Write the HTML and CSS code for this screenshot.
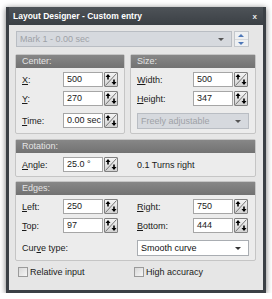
FILE: index.html
```html
<!DOCTYPE html>
<html lang="en">
<head>
    <meta charset="UTF-8">
    <title>Layout Designer - Custom entry</title>
    <link rel="stylesheet" href="styles.css">
</head>
<body>
    <div class="window">
        <div class="titlebar">
            <span class="title">Layout Designer - Custom entry</span>
            <span class="close">x</span>
        </div>
        <div class="client">
            <div class="mark-row">
                <div class="combo disabled mark">Mark 1 - 0.00 sec<span class="arrow"></span></div>
                <div class="updown">
                    <span class="ud up"></span>
                    <span class="ud down"></span>
                </div>
            </div>

            <div class="pair">
                <div class="group">
                    <div class="group-head">Center:</div>
                    <div class="group-body grid-center">
                        <label><u>X</u>:</label>
                        <div class="field">500</div>
                        <div class="spin"></div>
                        <label><u>Y</u>:</label>
                        <div class="field">270</div>
                        <div class="spin"></div>
                        <label class="gap-top"><u>T</u>ime:</label>
                        <div class="field gap-top">0.00 sec</div>
                        <div class="spin gap-top"></div>
                    </div>
                </div>
                <div class="group">
                    <div class="group-head">Size:</div>
                    <div class="group-body grid-size">
                        <label><u>W</u>idth:</label>
                        <div class="field">500</div>
                        <div class="spin"></div>
                        <label><u>H</u>eight:</label>
                        <div class="field">347</div>
                        <div class="spin"></div>
                        <div class="combo disabled wide gap-top">Freely adjustable<span class="arrow"></span></div>
                    </div>
                </div>
            </div>

            <div class="group">
                <div class="group-head">Rotation:</div>
                <div class="group-body grid-full">
                    <label><u>A</u>ngle:</label>
                    <div class="field">25.0 °</div>
                    <div class="spin"></div>
                    <span></span>
                    <span class="note">0.1 Turns right</span>
                </div>
            </div>

            <div class="group">
                <div class="group-head">Edges:</div>
                <div class="group-body grid-full">
                    <label><u>L</u>eft:</label>
                    <div class="field">250</div>
                    <div class="spin"></div>
                    <span></span>
                    <label><u>R</u>ight:</label>
                    <div class="field">750</div>
                    <div class="spin"></div>

                    <label><u>T</u>op:</label>
                    <div class="field">97</div>
                    <div class="spin"></div>
                    <span></span>
                    <label><u>B</u>ottom:</label>
                    <div class="field">444</div>
                    <div class="spin"></div>

                    <label class="curve gap-top">Cur<u>v</u>e type:</label>
                    <div class="combo curve-combo gap-top">Smooth curve<span class="arrow"></span></div>
                </div>
            </div>

            <div class="checks">
                <label class="check"><span class="box"></span>Relative input</label>
                <label class="check"><span class="box"></span>High accuracy</label>
            </div>
        </div>
    </div>
</body>
</html>
```

FILE: styles.css
```css
body {
    margin: 0;
    padding: 0;
    background: #ffffff;
    font-family: "Liberation Sans", Arial, sans-serif;
    font-size: 9px;
    color: #1a1a1a;
}
.window {
    box-sizing: border-box;
    width: 260px;
    height: 286px;
    margin: 7px 0 0 6px;
    padding: 0 3px 3px 3px;
    background: #3b4045;
    box-shadow: 0 1px 6px rgba(0, 0, 0, 0.55);
}
.titlebar {
    display: flex;
    align-items: center;
    justify-content: space-between;
    height: 18px;
    padding: 0 6px 0 4px;
    background: linear-gradient(#4e5358, #3b4045);
}
.title {
    color: #ffffff;
    font-weight: bold;
    font-size: 8.5px;
}
.close {
    color: #e8e8e8;
    font-weight: bold;
    font-size: 8px;
}
.client {
    box-sizing: border-box;
    height: 265px;
    padding: 6px 7px 0 6px;
    background: #e6e6e6;
}
.mark-row {
    display: flex;
    gap: 2px;
    margin-left: 1px;
}
.combo {
    box-sizing: border-box;
    position: relative;
    height: 16px;
    line-height: 14px;
    padding-left: 3px;
    border: 1px solid #a9adb2;
    background: #ffffff;
    color: #111;
}
.combo.disabled {
    background: #d6d9de;
    border-color: #b9bdc3;
    color: #9ea2a7;
}
.arrow {
    position: absolute;
    right: 7px;
    top: 6px;
    width: 0;
    height: 0;
    border-left: 3px solid transparent;
    border-right: 3px solid transparent;
    border-top: 3px solid #333;
}
.combo.disabled .arrow {
    border-top-color: #555;
}
.mark {
    width: 216px;
}
.updown {
    box-sizing: border-box;
    width: 15px;
    height: 16px;
    display: flex;
    flex-direction: column;
    border: 1px solid #c3c7cc;
    background: #eef0f2;
}
.ud {
    flex: 1;
    position: relative;
}
.ud::after {
    content: "";
    position: absolute;
    left: 3px;
    top: 2px;
    border-left: 3px solid transparent;
    border-right: 3px solid transparent;
}
.ud.up::after {
    border-bottom: 3px solid #4f78b8;
}
.ud.down {
    border-top: 1px solid #d5d8dc;
}
.ud.down::after {
    top: 2px;
    border-top: 3px solid #4f78b8;
}
.pair {
    display: grid;
    grid-template-columns: 110px 1fr;
    gap: 5px;
    margin-top: 7px;
}
.group {
    border: 1px solid #c5c5c5;
    border-radius: 2px;
    background: #ececec;
    margin-bottom: 4px;
}
.pair .group {
    margin-bottom: 0;
}
.pair + .group {
    margin-top: 5px;
}
.group-head {
    height: 13px;
    line-height: 13px;
    padding-left: 6px;
    background: linear-gradient(#878787, #727272);
    color: #e4e4e4;
}
.group-body {
    display: grid;
    align-items: center;
    row-gap: 4px;
    padding: 4px 0 4px 6px;
}
.grid-center {
    grid-template-columns: 41px 41px 14px;
}
.grid-size {
    grid-template-columns: 56px 41px 14px;
}
.grid-full {
    grid-template-columns: 41px 41px 14px 19px 56px 41px 14px;
}
.gap-top {
    margin-top: 3px;
}
.field {
    box-sizing: border-box;
    width: 40px;
    height: 15px;
    line-height: 13px;
    padding-left: 3px;
    border: 1px solid #a6a6a6;
    background: #ffffff;
    white-space: nowrap;
    overflow: hidden;
}
.spin {
    box-sizing: border-box;
    width: 14px;
    height: 15px;
    border: 1px solid #808080;
    border-radius: 1px;
    background:
        url("data:image/svg+xml,%3Csvg xmlns='http://www.w3.org/2000/svg' width='12' height='13'%3E%3Cpath d='M11.5 0.5 L0.5 12.5' stroke='%23777' stroke-width='1'/%3E%3Cpath d='M3 1 L5.5 4 L3.8 4 L3.8 6.5 L2.2 6.5 L2.2 4 L0.5 4 Z' fill='%23000'/%3E%3Cpath d='M9 12 L6.5 9 L8.2 9 L8.2 6.5 L9.8 6.5 L9.8 9 L11.5 9 Z' fill='%23000'/%3E%3C/svg%3E") no-repeat center,
        linear-gradient(#f4f4f4, #d2d2d2);
}
.wide {
    grid-column: 1 / -1;
    width: 112px;
}
.note {
    grid-column: 5 / -1;
}
.curve {
    grid-column: 1 / 4;
}
.curve-combo {
    grid-column: 5 / -1;
    width: 112px;
}
.checks {
    display: grid;
    grid-template-columns: 116px 1fr;
    margin-top: 6px;
    padding-left: 3px;
}
.check {
    display: flex;
    align-items: center;
    gap: 2px;
}
.box {
    box-sizing: border-box;
    width: 10px;
    height: 10px;
    border: 1px solid #9a9a9a;
    background: linear-gradient(135deg, #d8d8d8, #f6f6f6);
}
```
